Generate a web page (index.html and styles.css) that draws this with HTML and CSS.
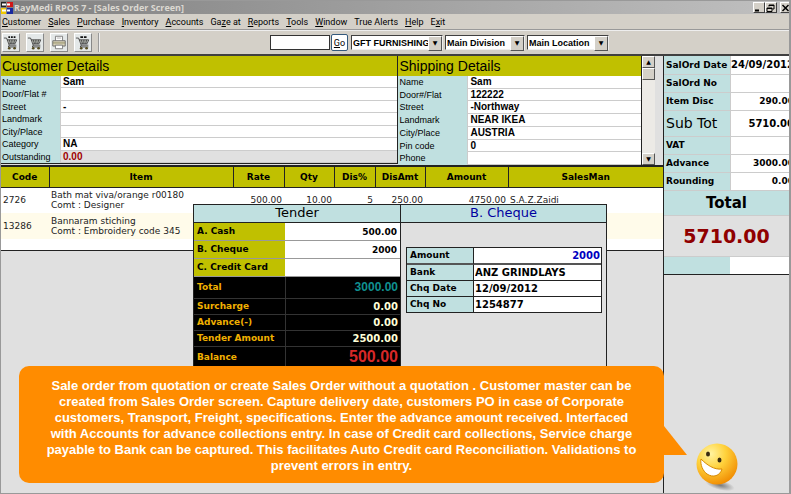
FILE: index.html
```html
<!DOCTYPE html>
<html lang="en">
<head>
    <meta charset="UTF-8">
    <meta name="viewport" content="width=device-width, initial-scale=1.0">
    <title>RayMedi RPOS 7 - [Sales Order Screen]</title>
    <link rel="stylesheet" href="styles.css">
</head>
<body>
    <svg class="defs" aria-hidden="true">
        <symbol id="cart" viewBox="0 0 18 18">
            <path d="M5 6h10l-2 4.500H7z" fill="#b8bcb4"/>
            <path d="M1 4h3l3 8h8M4.500 6h11l-2 4.500H6.500M7 6l1.500 4.500M10 6v4.500M13 6l-1 4.500" fill="none" stroke="#444" stroke-width="1"/>
            <path d="M7 12l-1 2h9" fill="none" stroke="#333" stroke-width="1"/>
            <circle cx="7" cy="15.500" r="1.500" fill="#554b20"/>
            <circle cx="13" cy="15.500" r="1.500" fill="#554b20"/>
        </symbol>
    </svg>

    <div class="window">
        <header class="title-bar">
            <svg class="logo" viewBox="0 0 12 12" aria-hidden="true">
                <rect x="0" y="0" width="5" height="5" fill="#222"/>
                <rect x="6" y="0" width="6" height="5" fill="#d01818"/>
                <rect x="0" y="6" width="5" height="6" fill="#f0c800"/>
                <rect x="6" y="6" width="6" height="6" fill="#1828a0"/>
                <path d="M1 2.500h4M6 2.500h3M1 8.500h4M6 8.500h3" stroke="#fff" stroke-width="2"/>
            </svg>
            <h1>RayMedi RPOS 7 - [Sales Order Screen]</h1>
            <div class="window-buttons">
                <button type="button" aria-label="Minimize"><svg viewBox="0 0 9 8"><path d="M1 6.500h4" stroke="#000" stroke-width="2"/></svg></button>
                <button type="button" aria-label="Restore"><svg viewBox="0 0 9 8"><path d="M3 2.500V1h5v4H6.500M3 1.500h5M1 4h5v3.500H1zM1 4.500h5" fill="none" stroke="#000"/></svg></button>
                <button type="button" aria-label="Close"><svg viewBox="0 0 9 8"><path d="M1.500 1l6 6M7.500 1l-6 6" stroke="#000" stroke-width="1.500"/></svg></button>
            </div>
        </header>

        <nav class="menu">
            <a href="#"><u>C</u>ustomer</a>
            <a href="#"><u>S</u>ales</a>
            <a href="#"><u>P</u>urchase</a>
            <a href="#"><u>I</u>nventory</a>
            <a href="#"><u>A</u>ccounts</a>
            <a href="#">Ga<u>z</u>e at</a>
            <a href="#"><u>R</u>eports</a>
            <a href="#"><u>T</u>ools</a>
            <a href="#"><u>W</u>indow</a>
            <a href="#">True Alerts</a>
            <a href="#"><u>H</u>elp</a>
            <a href="#">E<u>x</u>it</a>
        </nav>

        <div class="toolbar">
            <div class="tools">
                <button type="button" aria-label="New order"><svg viewBox="0 0 18 18"><use href="#cart"/><path d="M6 3h8" stroke="#111" stroke-width="2" stroke-dasharray="2 1"/></svg></button>
                <button type="button" aria-label="Open order"><svg viewBox="0 0 18 18"><use href="#cart"/></svg></button>
                <button type="button" aria-label="Print">
                    <svg viewBox="0 0 18 18">
                        <path d="M5 7V2h8v5" fill="#fff" stroke="#777"/>
                        <path d="M6.500 4h5" stroke="#aaa"/>
                        <path d="M2 7h14v6H2z" fill="#d9d3b8" stroke="#666"/>
                        <path d="M2 9.500h14" stroke="#8a8560"/>
                        <path d="M5 12h8v4H5z" fill="#fff" stroke="#777"/>
                    </svg>
                </button>
                <button type="button" aria-label="Save order"><svg viewBox="0 0 18 18"><use href="#cart"/><path d="M6 3h8" stroke="#111" stroke-width="2" stroke-dasharray="3 1"/></svg></button>
            </div>
            <form class="search">
                <input type="text" aria-label="Search">
                <button type="button"><u>G</u>o</button>
            </form>
            <div class="pickers">
                <span class="picker company"><select aria-label="Company"><option>GFT FURNISHINGS</option></select></span>
                <span class="picker division"><select aria-label="Division"><option>Main Division</option></select></span>
                <span class="picker location"><select aria-label="Location"><option>Main Location</option></select></span>
            </div>
        </div>

        <main class="workspace">
            <div class="order">
                <div class="details">
                    <section class="customer">
                        <h2>Customer Details</h2>
                        <dl>
                            <dt>Name</dt><dd>Sam</dd>
                            <dt>Door/Flat #</dt><dd></dd>
                            <dt>Street</dt><dd>-</dd>
                            <dt>Landmark</dt><dd></dd>
                            <dt>City/Place</dt><dd></dd>
                            <dt>Category</dt><dd>NA</dd>
                            <dt>Outstanding</dt><dd class="outstanding">0.00</dd>
                        </dl>
                    </section>
                    <section class="shipping">
                        <h2>Shipping Details</h2>
                        <dl>
                            <dt>Name</dt><dd>Sam</dd>
                            <dt>Door#/Flat</dt><dd>122222</dd>
                            <dt>Street</dt><dd>-Northway</dd>
                            <dt>Landmark</dt><dd>NEAR IKEA</dd>
                            <dt>City/Place</dt><dd>AUSTRIA</dd>
                            <dt>Pin code</dt><dd>0</dd>
                            <dt>Phone</dt><dd></dd>
                        </dl>
                    </section>
                    <div class="scrollbar">
                        <button type="button" class="up" aria-label="Scroll up"></button>
                        <div class="thumb"></div>
                        <button type="button" class="down" aria-label="Scroll down"></button>
                    </div>
                </div>

                <table class="items">
                    <colgroup>
                        <col class="c-code"><col class="c-item"><col class="c-rate"><col class="c-qty">
                        <col class="c-dis"><col class="c-disamt"><col class="c-amount"><col class="c-salesman">
                    </colgroup>
                    <thead>
                        <tr>
                            <th>Code</th><th>Item</th><th>Rate</th><th>Qty</th>
                            <th>Dis%</th><th>DisAmt</th><th>Amount</th><th>SalesMan</th>
                        </tr>
                    </thead>
                    <tbody>
                        <tr>
                            <td>2726</td>
                            <td>Bath mat viva/orange r00180<br>Comt : Designer</td>
                            <td class="num">500.00</td>
                            <td class="num">10.00</td>
                            <td class="num">5</td>
                            <td class="num">250.00</td>
                            <td class="num">4750.00</td>
                            <td>S.A.Z.Zaidi</td>
                        </tr>
                        <tr>
                            <td>13286</td>
                            <td>Bannaram stiching<br>Comt : Embroidery code 345</td>
                            <td></td><td></td><td></td><td></td><td></td><td></td>
                        </tr>
                        <tr class="blank"><td colspan="8"></td></tr>
                    </tbody>
                </table>
            </div>

            <aside class="summary">
                <table>
                    <tr><th>SalOrd Date</th><td class="date">24/09/2012</td></tr>
                    <tr><th>SalOrd No</th><td></td></tr>
                    <tr><th>Item Disc</th><td>290.00</td></tr>
                    <tr class="subtotal"><th>Sub Tot</th><td>5710.00</td></tr>
                    <tr><th>VAT</th><td></td></tr>
                    <tr><th>Advance</th><td>3000.00</td></tr>
                    <tr><th>Rounding</th><td>0.00</td></tr>
                </table>
                <h2>Total</h2>
                <p class="grand-total">5710.00</p>
                <div class="spare"></div>
            </aside>
        </main>

        <!-- Payment window -->
        <div class="payment">
            <section class="tender">
                <h2>Tender</h2>
                <div class="modes">
                    <label for="cash">A. Cash</label><input id="cash" type="text" value="500.00">
                    <label for="cheque">B. Cheque</label><input id="cheque" type="text" value="2000">
                    <label for="card">C. Credit Card</label><input id="card" type="text">
                </div>
                <table class="totals">
                    <tr class="tall"><th>Total</th><td class="total">3000.00</td></tr>
                    <tr><th>Surcharge</th><td>0.00</td></tr>
                    <tr><th>Advance(-)</th><td>0.00</td></tr>
                    <tr><th>Tender Amount</th><td>2500.00</td></tr>
                    <tr class="tall"><th>Balance</th><td class="balance">500.00</td></tr>
                </table>
            </section>
            <section class="cheque">
                <h2>B. Cheque</h2>
                <div class="cheque-form">
                    <label for="amount" class="amount">Amount</label><input id="amount" class="amount" type="text" value="2000">
                    <label for="bank">Bank</label><input id="bank" type="text" value="ANZ GRINDLAYS">
                    <label for="chq-date">Chq Date</label><input id="chq-date" type="text" value="12/09/2012">
                    <label for="chq-no">Chq No</label><input id="chq-no" type="text" value="1254877" autofocus>
                </div>
            </section>
        </div>

        <!-- Guide message -->
        <div class="bubble">
            <p>Sale order from quotation or create Sales Order without a quotation . Customer master can be<br>
            created from Sales Order screen. Capture delivery date, customers PO in case of Corporate<br>
            customers, Transport, Freight, specifications. Enter the advance amount received. Interfaced<br>
            with Accounts for advance collections entry. In case of Credit card collections, Service charge<br>
            payable to Bank can be captured. This facilitates Auto Credit card Reconciliation. Validations to<br>
            prevent errors in entry.</p>
            <svg class="tail" viewBox="0 0 23 29" aria-hidden="true"><path d="M0 0l23 29H0z" fill="#ff8c00"/></svg>
        </div>
        <svg class="smiley" viewBox="0 0 44 50" aria-hidden="true">
            <defs>
                <radialGradient id="face" cx="0.35" cy="0.25" r="0.8">
                    <stop offset="0" stop-color="#fff3a0"/>
                    <stop offset="0.450" stop-color="#ffd23c"/>
                    <stop offset="1" stop-color="#f08a00"/>
                </radialGradient>
                <radialGradient id="shade">
                    <stop offset="0" stop-color="#777"/>
                    <stop offset="1" stop-color="#777" stop-opacity="0"/>
                </radialGradient>
            </defs>
            <ellipse cx="25" cy="43" rx="15" ry="5" fill="url(#shade)" transform="rotate(14 25 43)"/>
            <circle cx="22" cy="22" r="20.500" fill="url(#face)"/>
            <path d="M6 17C12 23 19 28 27 27C25 34 18 36 12 32C8 29 5 23 6 17z" fill="#fff" stroke="#d88a00" stroke-width="1"/>
            <ellipse cx="13" cy="12" rx="2" ry="2.500" fill="#3a2c10"/>
            <ellipse cx="24.500" cy="18" rx="2" ry="2.500" fill="#3a2c10"/>
        </svg>
    </div>
</body>
</html>
```
FILE: styles.css
```css
* {
    margin: 0;
    padding: 0;
    box-sizing: border-box;
}

body {
    font-family: 'DejaVu Sans', Verdana, sans-serif;
    font-size: 9px;
    color: #000;
    background: #e0e0e0;
}

button, input, select {
    font-family: inherit;
    font-size: inherit;
    border: none;
    border-radius: 0;
    outline: none;
}

.defs {
    position: absolute;
    width: 0;
    height: 0;
}

.window {
    position: relative;
    display: flex;
    flex-direction: column;
    min-height: 100vh;
    border: 1px solid #999;
    border-right-width: 2px;
    overflow: hidden;
}

/* Title bar */
.title-bar {
    display: flex;
    align-items: center;
    gap: 1px;
    height: 13px;
    background: linear-gradient(90deg, #808080, #c0c0c0);
}

.title-bar h1 {
    flex: 1;
    font-family: 'Open Sans', 'Noto Sans', Tahoma, sans-serif;
    font-size: 9px;
    line-height: 13px;
    color: #dcd9d2;
}

.logo {
    width: 12px;
    height: 12px;
}

.window-buttons {
    display: flex;
    margin-right: -3px;
}

.window-buttons button {
    width: 12px;
    height: 11px;
    background: #d4d0c8;
    border: 1px solid;
    border-color: #fff #404040 #404040 #fff;
}

.window-buttons button:last-child {
    margin-left: 3px;
}

.window-buttons svg {
    display: block;
    width: 9px;
    height: 8px;
}

/* Menu */
.menu {
    display: flex;
    gap: 7px;
    height: 16px;
    padding-left: 1px;
    font-family: Roboto, Tahoma, sans-serif;
    font-size: 9px;
    line-height: 16px;
    background: #d4d0c8;
    border-bottom: 1px solid #999;
}

.menu a {
    color: #000;
    text-decoration: none;
    white-space: nowrap;
}

/* Toolbar */
.toolbar {
    display: flex;
    align-items: center;
    height: 26px;
    background: #d4d0c8;
    border-top: 1px solid #eee;
    border-bottom: 2px solid #404040;
}

.tools {
    display: flex;
    gap: 6px;
    width: 99px;
    padding-left: 1px;
    border-right: 2px groove #eee;
}

.tools button {
    width: 18px;
    height: 19px;
    background: #e4e8e8;
    border: 1px solid;
    border-color: #fff #888 #888 #fff;
}

.tools svg {
    display: block;
    width: 16px;
    height: 17px;
}

.search {
    display: flex;
    gap: 1px;
    margin-left: 170px;
}

.search input {
    width: 60px;
    height: 15px;
    align-self: center;
    background: #fff;
    border: 1px solid #333;
}

.search button {
    width: 17px;
    height: 17px;
    font-family: Roboto, Tahoma, sans-serif;
    background: #fff;
    border: 1px solid #34597c;
    border-radius: 2px;
}

.pickers {
    display: flex;
    gap: 2px;
    margin-left: 3px;
}

.picker {
    position: relative;
    height: 15px;
    background: #fff;
    border: 1px solid;
    border-color: #404040 #eee #eee #404040;
}

.picker select {
    width: 100%;
    height: 13px;
    padding: 0 12px 0 1px;
    font-family: 'Liberation Sans', Arial, sans-serif;
    font-weight: bold;
    color: #000;
    background: #fff;
    appearance: none;
}

.picker::after {
    content: '▼';
    position: absolute;
    top: 0;
    right: 0;
    width: 12px;
    height: 13px;
    font-size: 6px;
    line-height: 11px;
    text-align: center;
    background: #d4d0c8;
    border: 1px solid;
    border-color: #fff #555 #555 #fff;
    pointer-events: none;
}

.company {
    width: 92px;
}

.division {
    width: 80px;
}

.location {
    width: 82px;
}

/* Workspace */
.workspace {
    display: flex;
    flex: 1;
}

.order {
    flex: 1;
    min-width: 0;
    border-right: 1px solid #222;
}

.details {
    display: grid;
    grid-template-columns: 62fr 38fr 13px;
    height: 109px;
    padding-right: 8px;
}

.details section {
    display: flex;
    flex-direction: column;
    border-right: 1px solid #222;
}

.details h2 {
    height: 20px;
    padding-left: 1px;
    font-family: 'Liberation Sans', Arial, sans-serif;
    font-size: 14px;
    font-weight: normal;
    line-height: 20px;
    background: #c0c000;
}

.details dl {
    display: grid;
    flex: 1;
    grid-template-columns: 60px 1fr;
    grid-template-rows: repeat(7, 1fr);
    font-family: 'Liberation Sans', Arial, sans-serif;
    font-size: 9px;
    line-height: 11px;
    background: #fff;
}

.details dt {
    padding-left: 1px;
    background: #c0e0e0;
    border-right: 1px solid #ccc;
}

.details dd {
    padding-left: 2px;
    font-size: 10px;
    font-weight: bold;
    border-bottom: 1px solid #ccc;
}

.details dt, .details dd {
    padding-top: 1px;
}

.customer {
    margin-bottom: 1px;
    border-bottom: 1px solid #222;
}

.shipping dl {
    grid-template-columns: 70px 1fr;
}

.details .outstanding {
    color: #a00000;
    background: #e0e0e0;
}

.customer dd, .shipping dd {
    line-height: 10px;
}

.scrollbar {
    display: flex;
    flex-direction: column;
    background: #eceae6;
}

.scrollbar button, .thumb {
    height: 12px;
    background: #d4d0c8;
    border: 1px solid;
    border-color: #fff #555 #555 #fff;
}

.scrollbar button::before {
    display: block;
    font-size: 6px;
    line-height: 10px;
}

.scrollbar .up::before {
    content: '▲';
}

.scrollbar .down::before {
    content: '▼';
}

.scrollbar .down {
    margin-top: auto;
}

/* Order items */
.items {
    width: 100%;
    table-layout: fixed;
    border-collapse: collapse;
    border-top: 2px solid #222;
    border-bottom: 1px solid #222;
    background: #fff;
}

.c-code { width: 48px; }
.c-item { width: 184px; }
.c-rate { width: 51px; }
.c-qty { width: 50px; }
.c-dis { width: 41px; }
.c-disamt { width: 50px; }
.c-amount { width: 83px; }

.items th {
    height: 21px;
    background: #c0c000;
    border: 1px solid #222;
    border-width: 0 1px 1px;
}

.items th:first-child {
    border-left: none;
}

.items th:last-child {
    border-right: none;
}

.items td {
    height: 26px;
    padding: 0 2px;
    line-height: 10px;
    color: #222;
}

.items .num {
    text-align: right;
}

.items tr:nth-child(2) td {
    background: #fffbea;
}

.items .blank td {
    height: 11px;
}

/* Summary */
.summary {
    width: 125px;
    overflow: hidden;
}

.summary table {
    width: 130px;
    table-layout: fixed;
    border-collapse: collapse;
    background: #fff;
}

.summary th {
    width: 66px;
    height: 18px;
    padding-left: 2px;
    text-align: left;
    white-space: nowrap;
    background: #c0e0e0;
    border: 1px solid #ccc;
    border-width: 0 1px 1px 0;
}

.summary td {
    font-weight: bold;
    text-align: right;
    border-bottom: 1px solid #ccc;
}

.summary .date {
    font-size: 10px;
}

.summary .subtotal th {
    height: 26px;
    font-size: 14px;
    font-weight: normal;
}

.summary .subtotal td {
    font-size: 10px;
}

.summary h2 {
    font-size: 15px;
    line-height: 24px;
    text-align: center;
    background: #c0e0e0;
    border-bottom: 1px solid #ccc;
}

.grand-total {
    font-size: 19px;
    font-weight: bold;
    line-height: 40px;
    text-align: center;
    color: #900000;
}

.spare {
    height: 19px;
    background: linear-gradient(90deg, #c0e0e0 66px, #fff 66px);
    border-top: 1px solid #ccc;
    border-bottom: 1px solid #222;
}

/* Payment window, floats over the order */
.payment {
    position: absolute;
    top: 203px;
    left: 192px;
    display: flex;
    width: 414px;
    height: 270px;
    background: #e0e0e0;
    border: 1px solid #222;
    border-width: 1px 1px 0 1px;
}

.payment h2 {
    height: 18px;
    font-size: 13px;
    font-weight: normal;
    line-height: 16px;
    text-align: center;
    background: #c0e0e0;
    border-bottom: 1px solid #222;
}

.tender {
    flex: 1;
    border-right: 1px solid #222;
}

.modes {
    display: grid;
    grid-template-columns: 91px 1fr;
}

.modes label, .modes input {
    min-width: 0;
    height: 18px;
    padding: 0 3px;
    font-weight: bold;
    line-height: 17px;
    border-bottom: 1px solid #999;
}

.modes label {
    background: #c0c000;
}

.modes input {
    text-align: right;
    background: #fff;
}

.totals {
    width: 100%;
    border-collapse: collapse;
    background: #000;
}

.totals th, .totals td {
    height: 16px;
    padding: 0 2px;
    border-bottom: 1px solid #333;
}

.totals th {
    width: 91px;
    padding-left: 3px;
    text-align: left;
    color: #f0b000;
    border-right: 1px solid #333;
}

.totals td {
    font-size: 10px;
    font-weight: bold;
    text-align: right;
    color: #ffffd8;
}

.totals .tall th, .totals .tall td {
    height: 21px;
}

.totals .total {
    font-family: 'Liberation Sans', Arial, sans-serif;
    font-size: 12px;
    color: #109090;
}

.totals .balance {
    font-family: 'Liberation Sans', Arial, sans-serif;
    font-size: 16px;
    line-height: 16px;
    color: #d82828;
}

.cheque {
    width: 205px;
}

.cheque h2 {
    color: #0000a0;
}

.cheque-form {
    display: grid;
    grid-template-columns: 67px 1fr;
    margin: 24px 4px 0 5px;
    border: 1px solid #222;
}

.cheque-form label, .cheque-form input {
    min-width: 0;
    height: 16px;
    padding: 0 3px;
    font-weight: bold;
    line-height: 14px;
    border-bottom: 1px solid #222;
}

.cheque-form label {
    background: #c0e0e0;
    border-right: 1px solid #222;
}

.cheque-form input {
    padding: 0 1px;
    font-size: 10px;
    background: #fff;
}

.cheque-form .amount {
    height: 17px;
    border-bottom: 2px solid #555;
}

.cheque-form input.amount {
    text-align: right;
    color: #0000c0;
}

.cheque-form label:nth-last-child(2), .cheque-form input:last-child {
    height: 15px;
    border-bottom: none;
}

/* Guide message */
.bubble {
    position: absolute;
    top: 365px;
    left: 18px;
    width: 645px;
    height: 117px;
    padding-top: 12px;
    font-family: 'Liberation Sans', Arial, sans-serif;
    font-size: 13px;
    font-weight: bold;
    line-height: 16px;
    text-align: center;
    white-space: nowrap;
    color: #fff;
    background: #ff8c00;
    border-radius: 10px;
}

.tail {
    position: absolute;
    top: 60px;
    left: 100%;
    width: 23px;
    height: 29px;
}

.smiley {
    position: absolute;
    top: 441px;
    left: 694px;
    width: 44px;
    height: 50px;
}
```
